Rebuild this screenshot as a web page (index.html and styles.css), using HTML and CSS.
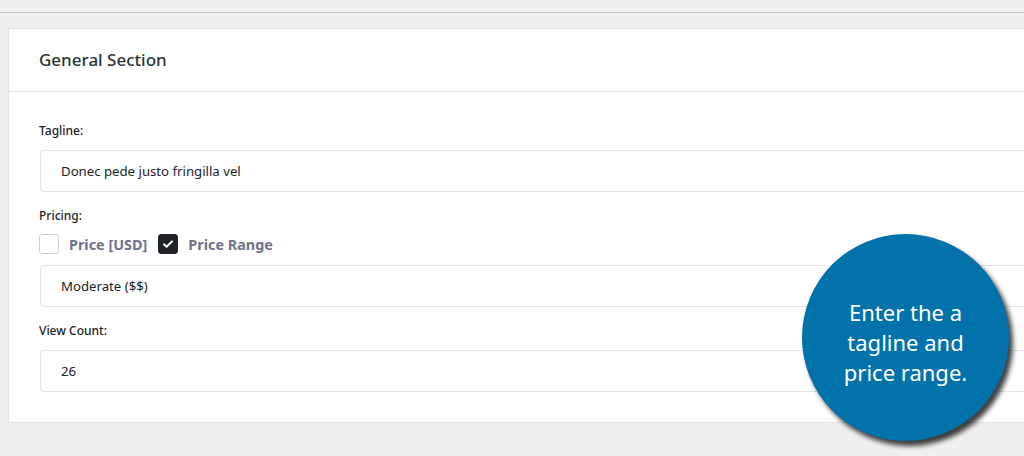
FILE: index.html
```html
<!DOCTYPE html>
<html lang="en">
<head>
<meta charset="utf-8">
<title>General Section</title>
<link rel="stylesheet" href="styles.css">
</head>
<body>
<div class="page">
  <div class="topbar"></div>
  <div class="card">
    <div class="card-header"><h2 class="card-title">General Section</h2></div>
    <div class="card-body">
      <label class="field-label">Tagline:</label>
      <div class="input">Donec pede justo fringilla vel</div>

      <label class="field-label gap-top">Pricing:</label>
      <div class="check-row">
        <span class="checkbox"></span><span class="check-text">Price [USD]</span>
        <span class="checkbox checked"><svg viewBox="0 0 20 20" width="20" height="20"><path d="M6 10.2l2.6 2.6L14 7.4" fill="none" stroke="#fff" stroke-width="2" stroke-linecap="round" stroke-linejoin="round"/></svg></span><span class="check-text">Price Range</span>
      </div>
      <div class="input after-check">Moderate ($$)</div>

      <label class="field-label gap-top">View Count:</label>
      <div class="input">26</div>
    </div>
  </div>
  <div class="callout">Enter the a<br>tagline and<br>price range.</div>
</div>
</body>
</html>
```

FILE: styles.css
```css
* { box-sizing: border-box; }
html, body { margin: 0; padding: 0; }
body {
  background: #f0f0f1;
  font-family: "Noto Sans", "Open Sans", sans-serif;
  color: #1d2327;
  overflow: hidden;
  width: 1024px;
  height: 456px;
}
.page {
  position: relative;
  height: 456px;
  padding: 0 0 0 8px;
}
.topbar {
  height: 13px;
  border-bottom: 1px solid #c3c4c7;
  margin-left: -8px;
  margin-bottom: 15px;
}
.card {
  background: #fff;
  border: 1px solid #e2e4e9;
  width: 1060px;
  height: 395px;
}
.card-header {
  height: 63px;
  border-bottom: 1px solid #e2e4e9;
  display: flex;
  align-items: center;
  padding-left: 30px;
}
.card-title {
  margin: 0;
  font-size: 17px;
  font-weight: 500;
  color: #2c3338;
  position: relative;
  top: -1px;
}
.card-body {
  padding: 30px 0 0 30px;
  display: flex;
  flex-direction: column;
  align-items: flex-start;
}
.field-label {
  display: block;
  font-size: 12px;
  line-height: 18px;
  font-weight: 500;
  color: #1d2327;
  margin-bottom: 10px;
}
.gap-top { margin-top: 15px; }
.input {
  width: 1000px;
  height: 42px;
  margin-left: 1px;
  border: 1px solid #e3e5e9;
  border-radius: 4px;
  padding-left: 20px;
  display: flex;
  align-items: center;
  font-size: 13.2px;
  color: #1d2327;
}
.check-row {
  display: flex;
  align-items: center;
  height: 20px;
  margin-top: -1px;
}
.checkbox {
  width: 20px;
  height: 20px;
  border: 1px solid #d0d4da;
  border-radius: 3px;
  background: #fff;
  display: inline-flex;
}
.checkbox.checked {
  background: #1e2327;
  border-color: #1e2327;
  margin-left: 11px;
}
.checkbox svg { margin: -1px; }
.check-text {
  margin-left: 10px;
  font-size: 14.4px;
  font-weight: 700;
  color: #6e7289;
}
.after-check { margin-top: 11px; }
.callout {
  position: absolute;
  left: 802px;
  top: 234px;
  width: 207px;
  height: 207px;
  border-radius: 50%;
  background: #0272aa;
  box-shadow: 4px 5px 5px rgba(0,0,0,0.75);
  color: #fff;
  font-family: "Noto Sans", "Open Sans", sans-serif;
  font-size: 22px;
  line-height: 30px;
  display: flex;
  align-items: center;
  justify-content: center;
  text-align: center;
  padding-top: 8px;
}
```
